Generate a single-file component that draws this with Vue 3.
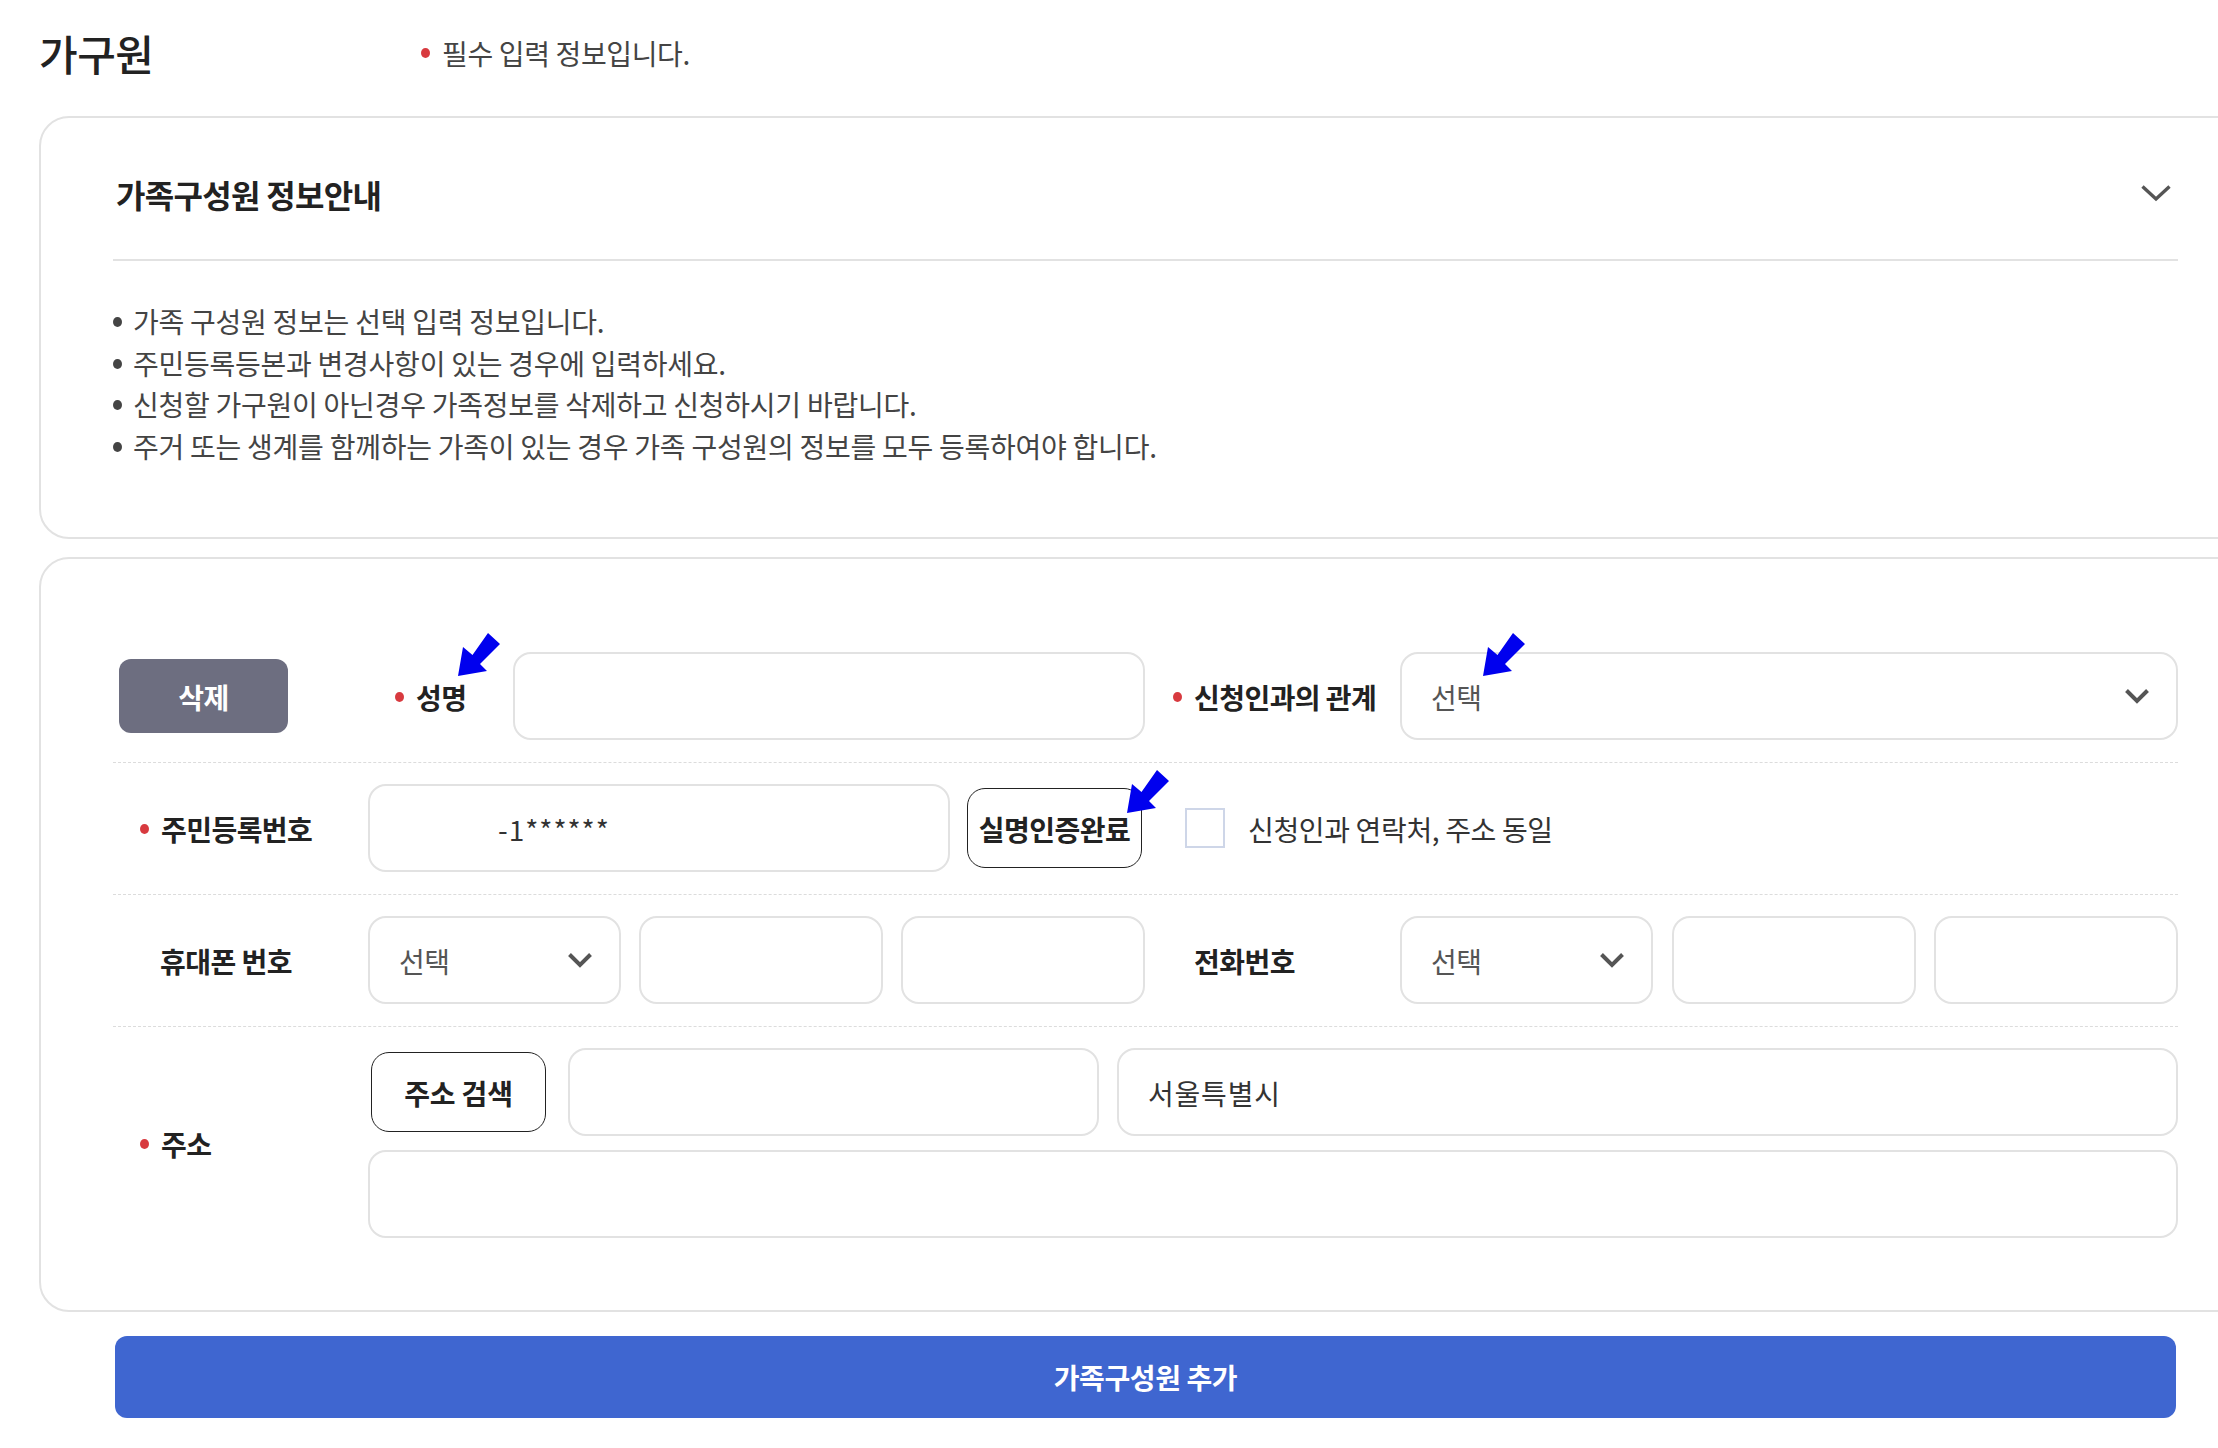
<script setup>
const notes = [
  '가족 구성원 정보는 선택 입력 정보입니다.',
  '주민등록등본과 변경사항이 있는 경우에 입력하세요.',
  '신청할 가구원이 아닌경우 가족정보를 삭제하고 신청하시기 바랍니다.',
  '주거 또는 생계를 함께하는 가족이 있는 경우 가족 구성원의 정보를 모두 등록하여야 합니다.'
]
const arrows = [
  { x: 457, y: 632 },
  { x: 1482, y: 632 },
  { x: 1126, y: 769 }
]
</script>

<template>
  <div class="page">
    <header class="head">
      <h1 class="title">가구원</h1>
      <p class="req"><i class="dot"></i>필수 입력 정보입니다.</p>
    </header>

    <section class="card info">
      <div class="info-head">
        <h2>가족구성원 정보안내</h2>
        <svg class="chev-lg" width="30" height="17" viewBox="0 0 30 17"><path d="M1.5 1.5 15 14 28.5 1.5" fill="none" stroke="#555" stroke-width="3.4"/></svg>
      </div>
      <ul class="notes">
        <li v-for="n in notes" :key="n">{{ n }}</li>
      </ul>
    </section>

    <section class="card form">
      <div class="row">
        <button class="del">삭제</button>
        <div class="label l-name"><i class="dot"></i>성명</div>
        <div class="field f-name"></div>
        <div class="label l-rel"><i class="dot"></i>신청인과의 관계</div>
        <div class="field select grow">
          <span>선택</span>
          <svg width="24" height="15" viewBox="0 0 24 15"><path d="M1.5 1.5 12 12 22.5 1.5" fill="none" stroke="#555" stroke-width="4"/></svg>
        </div>
      </div>

      <div class="row">
        <div class="label l-main"><i class="dot"></i>주민등록번호</div>
        <div class="field f-id">-1******</div>
        <button class="ghost b-verify">실명인증완료</button>
        <span class="check"></span>
        <span class="check-text">신청인과 연락처, 주소 동일</span>
      </div>

      <div class="row">
        <div class="label l-main l-plain">휴대폰 번호</div>
        <div class="field select f-sel">
          <span>선택</span>
          <svg width="24" height="15" viewBox="0 0 24 15"><path d="M1.5 1.5 12 12 22.5 1.5" fill="none" stroke="#555" stroke-width="4"/></svg>
        </div>
        <div class="field f-tel"></div>
        <div class="field f-tel"></div>
        <div class="label l-phone">전화번호</div>
        <div class="field select f-sel">
          <span>선택</span>
          <svg width="24" height="15" viewBox="0 0 24 15"><path d="M1.5 1.5 12 12 22.5 1.5" fill="none" stroke="#555" stroke-width="4"/></svg>
        </div>
        <div class="field f-tel f-tel-2"></div>
        <div class="field f-tel grow"></div>
      </div>

      <div class="row last">
        <div class="label l-main"><i class="dot"></i>주소</div>
        <div class="addr">
          <div class="addr-top">
            <button class="ghost b-addr">주소 검색</button>
            <div class="field f-zip"></div>
            <div class="field f-city grow">서울특별시</div>
          </div>
          <div class="field"></div>
        </div>
      </div>
    </section>

    <button class="add">가족구성원 추가</button>

    <svg
      v-for="(a, i) in arrows"
      :key="i"
      class="arrow"
      :style="{ left: a.x + 'px', top: a.y + 'px' }"
      width="44"
      height="46"
      viewBox="0 0 44 46"
    >
      <polygon points="1,44 6,15 15.5,23 31,1 43,12 23,32 30,39" fill="#0000ee" />
    </svg>
  </div>
</template>

<style scoped>
.page {
  position: relative;
  width: 2218px;
  height: 1448px;
  box-sizing: border-box;
  padding-left: 39px;
  overflow: hidden;
  background: #fff;
  color: #222;
  font-family: "Noto Sans CJK KR", "Noto Sans", sans-serif;
  font-size: 28px;
  letter-spacing: -0.55px;
}
.head {
  display: flex;
  align-items: center;
  height: 116px;
  padding-bottom: 11px;
  box-sizing: border-box;
}
.title {
  margin: 0;
  width: 382px;
  font-size: 42px;
  font-weight: 500;
  letter-spacing: -0.5px;
  color: #222;
}
.req {
  margin: 0;
  display: flex;
  align-items: center;
  color: #444;
  letter-spacing: -0.35px;
}
.dot {
  flex: none;
  width: 9px;
  height: 10px;
  border-radius: 50%;
  background: #d83a3f;
  margin-right: 12px;
}
.card {
  box-sizing: border-box;
  width: 2209px;
  border: 2px solid #e2e2e2;
  border-radius: 30px;
  padding-left: 72px;
  padding-right: 68px;
}
.info {
  height: 423px;
}
.info-head {
  display: flex;
  align-items: center;
  justify-content: space-between;
  height: 143px;
  border-bottom: 2px solid #e2e2e2;
  box-sizing: border-box;
  padding: 11px 7px 0 3px;
}
.info-head h2 {
  margin: 0;
  font-size: 32px;
  font-weight: 700;
  letter-spacing: -0.7px;
  color: #222;
}
.chev-lg {
  display: block;
  margin-bottom: 2px;
}
.notes {
  margin: 0;
  padding: 40px 0 0;
  list-style: none;
  color: #444;
  line-height: 41.7px;
  letter-spacing: -0.25px;
}
.notes li {
  position: relative;
  padding-left: 20px;
}
.notes li::before {
  content: "";
  position: absolute;
  left: 0;
  top: 16px;
  width: 9px;
  height: 10px;
  border-radius: 50%;
  background: #444;
}
.form {
  margin-top: 18px;
  height: 755px;
  padding-top: 72px;
}
.row {
  display: flex;
  align-items: center;
  padding: 21px 0 22px;
  border-bottom: 1px dashed #dcdcdc;
}
.row.last {
  border-bottom: 0;
}
.label {
  flex: none;
  display: flex;
  align-items: center;
  box-sizing: border-box;
  font-weight: 700;
  color: #222;
  padding-top: 1px;
}
.l-main {
  width: 255px;
  padding-left: 27px;
}
.l-plain {
  padding-left: 47px;
}
.l-name {
  width: 225px;
  padding-left: 107px;
}
.l-rel {
  width: 255px;
  padding-left: 28px;
}
.l-phone {
  width: 255px;
  padding-left: 49px;
}
.field {
  box-sizing: border-box;
  height: 88px;
  border: 2px solid #e2e2e2;
  border-radius: 18px;
  display: flex;
  align-items: center;
  background: #fff;
  color: #333;
  padding: 2px 27px 0 29px;
}
.grow {
  flex: 1;
  min-width: 0;
}
.select {
  justify-content: space-between;
  color: #555;
}
.select svg {
  display: block;
  margin-bottom: 2px;
}
.f-name {
  width: 632px;
}
.f-id {
  width: 582px;
  padding-left: 128px;
  letter-spacing: 1px;
}
.f-sel {
  flex: none;
  width: 253px;
}
.f-tel {
  flex: none;
  width: 244px;
  margin-left: 18px;
}
.f-tel-2 {
  margin-left: 19px;
}
.f-tel.grow {
  flex: 1;
}
.del {
  flex: none;
  box-sizing: border-box;
  width: 169px;
  height: 74px;
  margin-left: 6px;
  padding: 2px 0 0;
  border: 0;
  border-radius: 12px;
  background: #6d6e80;
  color: #fff;
  font: inherit;
  font-weight: 700;
  letter-spacing: inherit;
}
.ghost {
  flex: none;
  box-sizing: border-box;
  width: 175px;
  height: 80px;
  padding: 2px 0 0;
  border: 1.5px solid #222;
  border-radius: 18px;
  background: #fff;
  color: #222;
  font: inherit;
  font-weight: 700;
  letter-spacing: inherit;
}
.b-verify {
  margin-left: 17px;
}
.check {
  flex: none;
  box-sizing: border-box;
  width: 40px;
  height: 40px;
  margin-left: 43px;
  border: 2px solid #ced6e8;
  background: #fff;
}
.check-text {
  margin-left: 23px;
  padding-top: 2px;
  color: #333;
  letter-spacing: -0.35px;
}
.addr {
  flex: 1;
  min-width: 0;
  display: flex;
  flex-direction: column;
  gap: 14px;
}
.addr-top {
  display: flex;
  align-items: center;
}
.b-addr {
  margin-left: 3px;
  letter-spacing: -0.2px;
}
.f-zip {
  flex: none;
  width: 531px;
  margin-left: 22px;
}
.f-city {
  margin-left: 18px;
  letter-spacing: 0.8px;
}
.add {
  display: block;
  box-sizing: border-box;
  width: 2061px;
  height: 82px;
  margin: 24px 0 0 76px;
  border: 0;
  border-radius: 12px;
  background: #3f66d0;
  color: #fff;
  font: inherit;
  font-weight: 700;
  letter-spacing: -0.4px;
}
.arrow {
  position: absolute;
  display: block;
}
</style>
